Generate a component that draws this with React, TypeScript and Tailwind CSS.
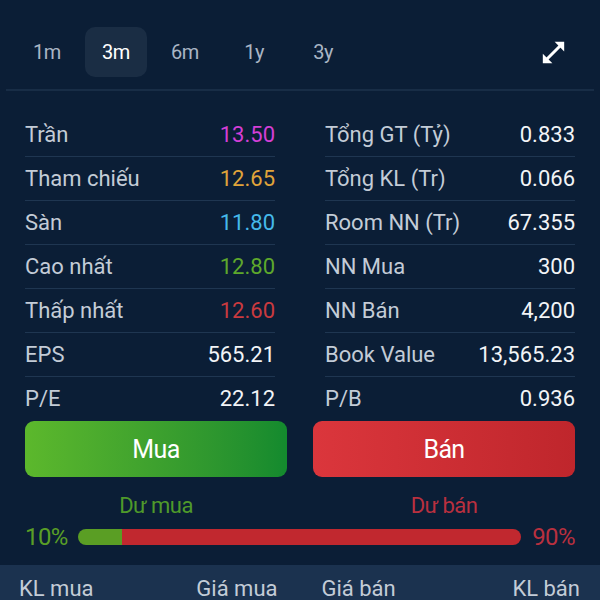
import React from "react";

const tabs = ["1m", "3m", "6m", "1y", "3y"];

const leftRows = [
  { label: "Trần", value: "13.50", color: "text-[#d43fd6]" },
  { label: "Tham chiếu", value: "12.65", color: "text-[#e0a43a]" },
  { label: "Sàn", value: "11.80", color: "text-[#45b9ea]" },
  { label: "Cao nhất", value: "12.80", color: "text-[#5ea82c]" },
  { label: "Thấp nhất", value: "12.60", color: "text-[#c93a3f]" },
  { label: "EPS", value: "565.21", color: "text-[#f2f4f7]" },
  { label: "P/E", value: "22.12", color: "text-[#f2f4f7]" },
];

const rightRows = [
  { label: "Tổng GT (Tỷ)", value: "0.833" },
  { label: "Tổng KL (Tr)", value: "0.066" },
  { label: "Room NN (Tr)", value: "67.355" },
  { label: "NN Mua", value: "300" },
  { label: "NN Bán", value: "4,200" },
  { label: "Book Value", value: "13,565.23" },
  { label: "P/B", value: "0.936" },
];

function ExpandIcon() {
  return (
    <svg width="27" height="27" viewBox="0 0 24 24" fill="none">
      <path d="M6 18 L18 6" stroke="#ffffff" strokeWidth="2.6" />
      <polygon points="21.5,2.5 21.5,11 13,2.5" fill="#ffffff" />
      <polygon points="2.5,21.5 2.5,13 11,21.5" fill="#ffffff" />
    </svg>
  );
}

function Row({
  label,
  value,
  color,
  last,
}: {
  label: string;
  value: string;
  color: string;
  last: boolean;
}) {
  return (
    <div
      className={`flex h-[44px] items-center justify-between ${
        last ? "" : "border-b border-[#1f3651]"
      }`}
    >
      <span className="text-[#c3ccd7]">{label}</span>
      <span className={color}>{value}</span>
    </div>
  );
}

export default function App() {
  return (
    <div
      className="h-[600px] w-[600px] overflow-hidden bg-[#0b1e36] text-[22px] leading-none"
      style={{ fontFamily: "Roboto, 'Noto Sans', sans-serif" }}
    >
      {/* Period tabs */}
      <div className="flex items-center pl-[16px] pr-[33px] pt-[27px]">
        <div className="flex gap-[7px]">
          {tabs.map((t) => (
            <div
              key={t}
              className={`flex h-[50px] w-[62px] items-center justify-center rounded-[10px] text-[20px] tracking-tight ${
                t === "3m" ? "bg-[#1a2d44] text-white" : "text-[#a9b5c4]"
              }`}
            >
              {t}
            </div>
          ))}
        </div>
        <div className="ml-auto flex">
          <ExpandIcon />
        </div>
      </div>
      <div className="mx-[6px] mt-[12px] h-[2px] bg-[#182d46]" />

      {/* Stats */}
      <div className="grid grid-cols-2 gap-x-[50px] px-[25px] pt-[22px]">
        <div>
          {leftRows.map((r, i) => (
            <Row key={r.label} {...r} last={i === leftRows.length - 1} />
          ))}
        </div>
        <div>
          {rightRows.map((r, i) => (
            <Row
              key={r.label}
              label={r.label}
              value={r.value}
              color="text-[#f2f4f7]"
              last={i === rightRows.length - 1}
            />
          ))}
        </div>
      </div>

      {/* Buy / sell buttons */}
      <div className="grid grid-cols-2 gap-[26px] px-[25px]">
        <div>
          <button className="flex h-[56px] w-full items-center justify-center rounded-[9px] bg-gradient-to-r from-[#5cb82c] to-[#138a2e] text-[25px] tracking-tight text-white">
            Mua
          </button>
          <div className="mt-[18px] text-center text-[22px] tracking-tight text-[#4f9a2a]">
            Dư mua
          </div>
        </div>
        <div>
          <button className="flex h-[56px] w-full items-center justify-center rounded-[9px] bg-gradient-to-r from-[#db363c] to-[#bf262c] text-[25px] tracking-tight text-white">
            Bán
          </button>
          <div className="mt-[18px] text-center text-[22px] tracking-tight text-[#b9303f]">
            Dư bán
          </div>
        </div>
      </div>

      {/* Ratio bar */}
      <div className="mt-[8px] flex items-center px-[25px] text-[24px] tracking-tight">
        <span className="w-[46px] text-[#5a9e26]">10%</span>
        <div className="ml-[7px] flex h-[16px] w-[443px] overflow-hidden rounded-full">
          <div className="w-[10%] bg-[#5a9e24]" />
          <div className="flex-1 bg-[#c1282f]" />
        </div>
        <span className="ml-auto text-[#b9303f]">90%</span>
      </div>

      {/* Order book header */}
      <div className="mt-[16px] grid h-[44px] grid-cols-2 items-center gap-x-[44px] bg-[#1b324f] pl-[19px] pr-[20px] pt-[4px] text-[#c3ccd7]">
        <div className="flex justify-between">
          <span>KL mua</span>
          <span>Giá mua</span>
        </div>
        <div className="flex justify-between">
          <span>Giá bán</span>
          <span>KL bán</span>
        </div>
      </div>
    </div>
  );
}
